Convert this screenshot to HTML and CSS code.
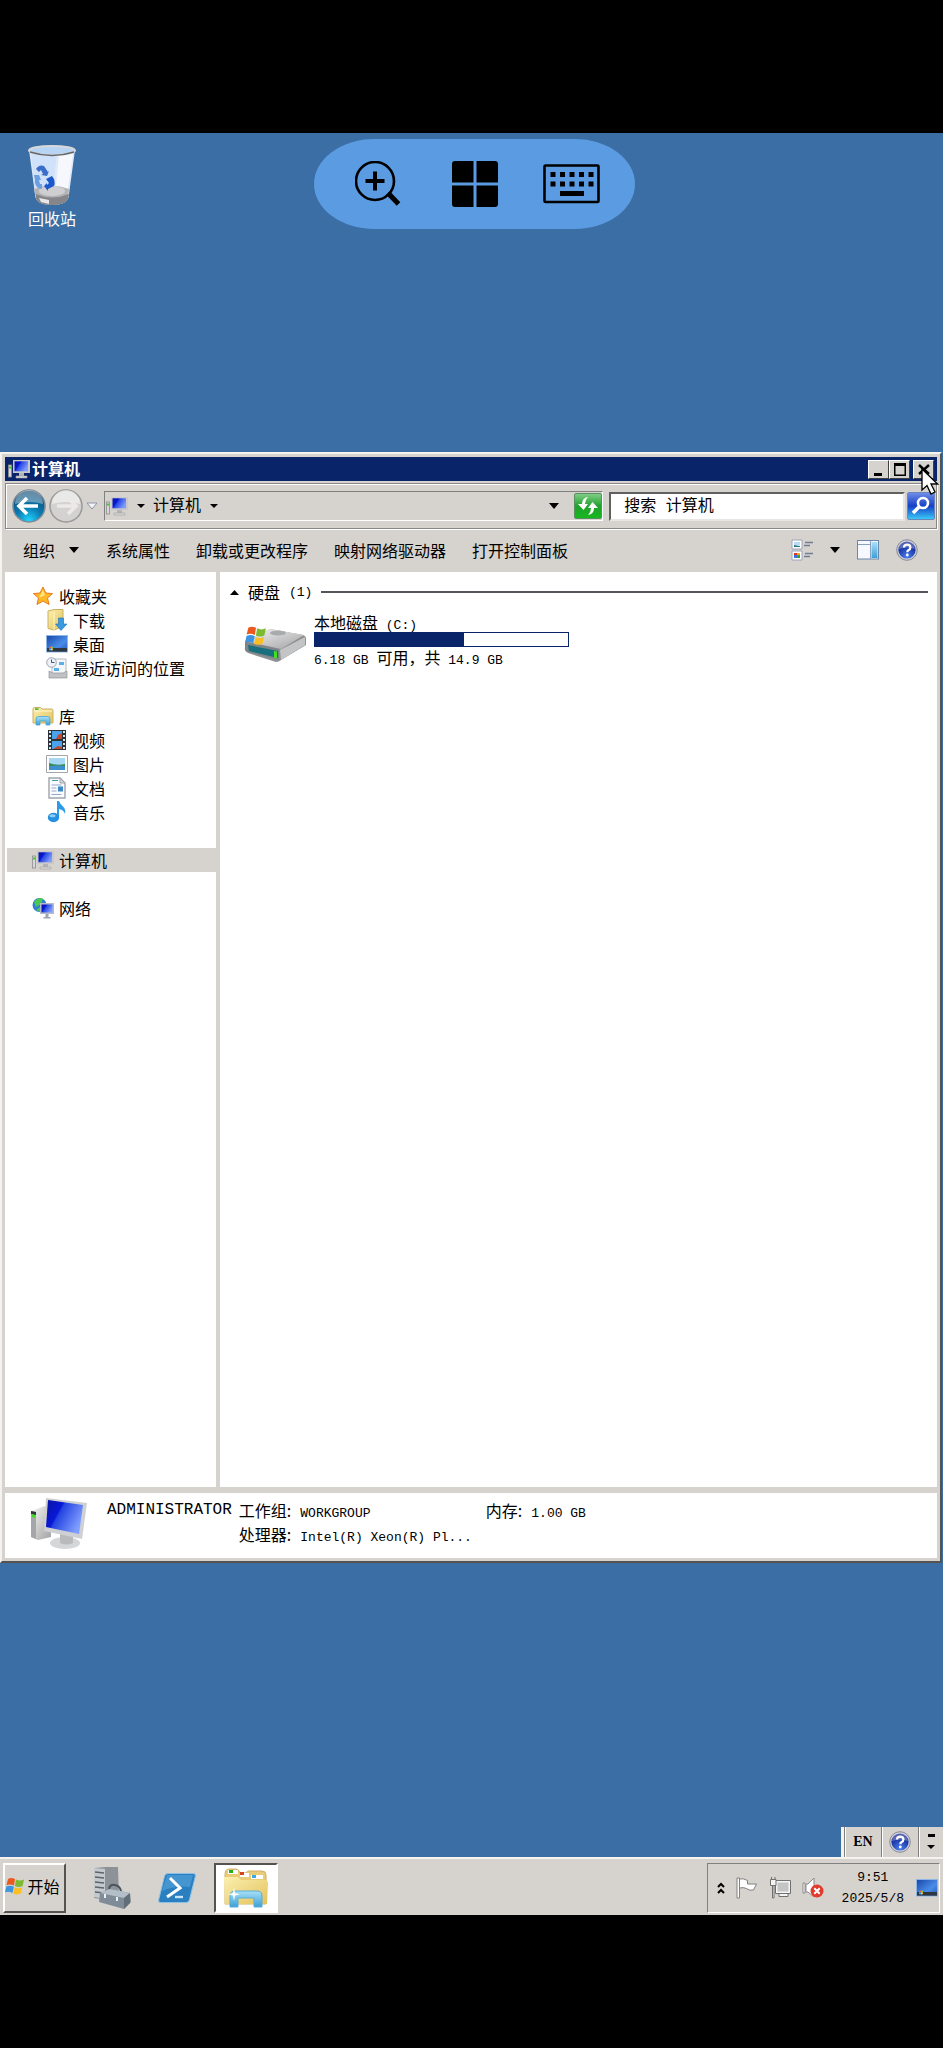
FILE: index.html
```html
<!DOCTYPE html>
<html lang="zh-CN">
<head>
    <meta charset="UTF-8">
    <meta name="viewport" content="width=device-width, initial-scale=1.0">
    <title>计算机</title>
    <link rel="stylesheet" href="styles.css">
</head>
<body>
    <!-- Shared icon shapes -->
    <svg class="defs" aria-hidden="true">
        <defs>
            <linearGradient id="screen" x1="0" y1="0" x2="1" y2="0.5">
                <stop offset="0" stop-color="#0a14a0"/>
                <stop offset="0.4" stop-color="#0818d8"/>
                <stop offset="0.45" stop-color="#2444e0"/>
                <stop offset="1" stop-color="#7f9cff"/>
            </linearGradient>
            <linearGradient id="metal" x1="0" y1="0" x2="1" y2="1">
                <stop offset="0" stop-color="#f6f6f6"/>
                <stop offset="1" stop-color="#a2a2a4"/>
            </linearGradient>
            <linearGradient id="folder" x1="0" y1="0" x2="1" y2="1">
                <stop offset="0" stop-color="#fbf0b0"/>
                <stop offset="1" stop-color="#e3c25c"/>
            </linearGradient>
            <linearGradient id="aqua" x1="0" y1="0" x2="0" y2="1">
                <stop offset="0" stop-color="#a8e0f8"/>
                <stop offset="1" stop-color="#3c9fd6"/>
            </linearGradient>
            <linearGradient id="sky" x1="0" y1="0" x2="1" y2="1">
                <stop offset="0" stop-color="#1746a8"/>
                <stop offset="0.6" stop-color="#4a8ce8"/>
                <stop offset="1" stop-color="#2458b8"/>
            </linearGradient>
            <radialGradient id="blueball" cx="0.5" cy="0.9" r="0.8">
                <stop offset="0" stop-color="#4a80f0"/>
                <stop offset="1" stop-color="#0a1c8c"/>
            </radialGradient>
            <radialGradient id="teal" cx="0.5" cy="0.95" r="0.85">
                <stop offset="0" stop-color="#1fd4ff"/>
                <stop offset="0.5" stop-color="#0a78b0"/>
                <stop offset="1" stop-color="#155078"/>
            </radialGradient>
        </defs>
        <symbol id="i-computer" viewBox="0 0 22 20">
            <rect x="0.5" y="6" width="3" height="12" fill="#d8d8d8" stroke="#8c8c8c" stroke-width="0.8"/>
            <rect x="1" y="7.5" width="2" height="2" fill="#3ad020"/>
            <path d="M5 1h17v13H5z" fill="#c9c9cb"/>
            <path d="M6.5 2.3h13.5v10H6.5z" fill="url(#screen)"/>
            <path d="M11 14h5v3h-5z" fill="#b4b4b6"/>
            <path d="M8 17h11v2H8z" fill="#dadada" stroke="#a0a0a0" stroke-width="0.6"/>
        </symbol>
        <symbol id="i-help" viewBox="0 0 22 22">
            <circle cx="11" cy="11" r="10.3" fill="#c9ccd8" stroke="#8c8c98"/>
            <circle cx="11" cy="11" r="8.6" fill="url(#blueball)"/>
            <path d="M3 10a8 8 0 0 1 16 0q-8-3-16 0z" fill="#fff" opacity="0.3"/>
            <path d="M8 8.6q0-3 3.2-3t3.2 2.8q0 1.6-1.8 2.6-1.3.8-1.3 2.2" fill="none" stroke="#fff" stroke-width="2.2"/>
            <circle cx="11.3" cy="16" r="1.4" fill="#fff"/>
        </symbol>
        <symbol id="i-desktop" viewBox="0 0 22 18">
            <rect x="0.5" y="0.5" width="21" height="16.5" fill="url(#sky)" stroke="#8fb6e4"/>
            <rect x="1" y="13" width="20" height="3.6" fill="#30363e"/>
            <path d="M3 12l2-.6v2H3z" fill="#f06030"/>
            <path d="M5 11.400l2 .4v1.600H5z" fill="#7cd040"/>
            <path d="M3 13.500h2v2l-2-.6z" fill="#40b0f8"/>
            <path d="M5 13.500h2v1.400l-2 .6z" fill="#f8d040"/>
        </symbol>
        <symbol id="i-flag" viewBox="0 0 20 18">
            <path d="M3 2q3-2 7 0L9 8.500q-4-2-7.500-.3z" fill="#ea5a20"/>
            <path d="M11 2.500q4 2 8 0L17.600 9q-4 2-7.700 0z" fill="#7cba32"/>
            <path d="M1.400 9.500q4-1.800 7.500.2L7.400 16q-4-2-7.400-.5z" fill="#3f94e0"/>
            <path d="M9.700 10.300q4 1.800 7.700 0L16 16.300q-4 2.200-7.800.2z" fill="#fbbf24"/>
        </symbol>
        <symbol id="i-library" viewBox="0 0 22 20">
            <path d="M1 3q0-1.500 1.500-1.500h6L10 3h9.500Q21 3 21 4.500V17H1z" fill="url(#folder)" stroke="#cdb060"/>
            <path d="M2 5h18" stroke="#fff8d0"/>
            <rect x="3" y="2.300" width="3.500" height="1.600" fill="#38b838"/>
            <path d="M4 19v-6q0-2.500 2.500-2.500h9Q18 10.500 18 13v6h-4v-4H8v4z" fill="url(#aqua)" stroke="#4aa4d4" stroke-width="0.800"/>
        </symbol>
    </svg>

    <main class="desktop">
        <div class="desktop-top">
            <a class="recycle-bin" href="#">
                <svg width="50" height="62" viewBox="0 0 50 62" aria-hidden="true">
                    <path d="M2 6h46l-6 44q0 11-17 11T8 50z" fill="#dfe9f7"/>
                    <path d="M4 8h26l-5 44-17-2z" fill="#cfe2fa"/>
                    <path d="M32 10h14l-6 41-12 2z" fill="#f6f8fe"/>
                    <path d="M7 45q17-7 35 0l-1 9q-2 7-16 7T9 54z" fill="#b3b3b6"/>
                    <path d="M9 50q16 7 33 0l-1 5q-3 6-16 6T9 55z" fill="#86868a"/>
                    <path d="M12 54l10 2v4l-8-2z" fill="#e8e8ea"/>
                    <ellipse cx="25" cy="47" rx="13" ry="5" fill="#cfcfd2"/>
                    <ellipse cx="25" cy="6.500" rx="23" ry="4.500" fill="#b8d4f4" stroke="#d8d8d8" stroke-width="2"/>
                    <path d="M3 8q22 7 44 0" fill="none" stroke="#66686c" stroke-width="1.500"/>
                    <path d="M9 25q3-5 8-3l4 6 1-1-2 5-6-1 2-1-2-4-2 2z" fill="#3a6ec8"/>
                    <path d="M19 35l6-3q4 5 2 10l-6 3v2l-4-5 3-3v2l2-2z" fill="#1c58cc"/>
                    <path d="M7 31l5 0 2 5-2 0 1 4 2 0v5l-4-1q-4-4-3-8z" fill="#6d9fe0"/>
                </svg>
                <span>回收站</span>
            </a>
            <div class="remote-bar">
                <button aria-label="放大">
                    <svg width="46" height="46" viewBox="0 0 46 46" fill="none" stroke="#000">
                        <circle cx="20" cy="20" r="19" stroke-width="2.600"/>
                        <path d="M10.500 20h19M20 10.500v19" stroke-width="4"/>
                        <path d="M33 32l10.500 11" stroke-width="5"/>
                    </svg>
                </button>
                <button aria-label="开始菜单">
                    <svg width="46" height="46" viewBox="0 0 46 46">
                        <path d="M3 0h18.500v21.500H0V3q0-3 3-3zM24.500 0H43q3 0 3 3v18.500H24.500zM0 24.500h21.500V46H3q-3 0-3-3zM24.500 24.500H46V43q0 3-3 3H24.500z"/>
                    </svg>
                </button>
                <button aria-label="键盘">
                    <svg width="57" height="40" viewBox="0 0 57 40">
                        <rect x="1.500" y="1.500" width="54" height="36.500" rx="1" fill="none" stroke="#000" stroke-width="2.600"/>
                        <path d="M7.500 8h5v5h-5zM17 8h5v5h-5zM26.500 8h5v5h-5zM36 8h5v5h-5zM45.500 8h5v5h-5zM7.500 17.500h5v5h-5zM17 17.500h5v5h-5zM26.500 17.500h5v5h-5zM36 17.500h5v5h-5zM45.500 17.500h5v5h-5zM17 27h24v5H17z"/>
                    </svg>
                </button>
            </div>
        </div>

        <section class="window">
            <header class="title-bar">
                <svg width="22" height="20"><use href="#i-computer"/></svg>
                <h1>计算机</h1>
                <div class="window-buttons">
                    <button aria-label="最小化"><svg width="20" height="17"><path d="M5 12h8v3H5z"/></svg></button>
                    <button aria-label="最大化"><svg width="20" height="17"><path d="M4 2h12v13H4zM5.500 5v8.500h9V5z" fill-rule="evenodd"/></svg></button>
                    <button class="close" aria-label="关闭"><svg width="20" height="17"><path d="M5 4l10 9M15 4L5 13" stroke="#000" stroke-width="2.400"/></svg></button>
                </div>
                <svg class="cursor" width="18" height="28" viewBox="0 0 18 28" aria-hidden="true">
                    <path d="M1 1v21l5-4.500L10 26l4-2-4-8h6.500z" fill="#fff" stroke="#000" stroke-width="1.300"/>
                </svg>
            </header>

            <div class="address-row">
                <div class="history">
                    <button aria-label="后退">
                        <svg width="34" height="34" viewBox="0 0 34 34">
                            <circle cx="17" cy="17" r="16" fill="url(#teal)" stroke="#7c8a94" stroke-width="1.500"/>
                            <path d="M3 15a14 14 0 0 1 28 0q-14-4-28 0z" fill="#fff" opacity="0.350"/>
                            <path d="M15 9l-8 8 8 8M8 17h18" fill="none" stroke="#fff" stroke-width="3.600"/>
                        </svg>
                    </button>
                    <button aria-label="前进">
                        <svg width="34" height="34" viewBox="0 0 34 34">
                            <circle cx="17" cy="17" r="16" fill="#d3d2d0" stroke="#9a9a9a" stroke-width="1.500"/>
                            <path d="M3 15a14 14 0 0 1 28 0q-14-4-28 0z" fill="#fff" opacity="0.500"/>
                            <path d="M19 9l8 8-8 8M26 17H8" fill="none" stroke="#ece9e6" stroke-width="3.600"/>
                        </svg>
                    </button>
                    <button aria-label="最近的页面">
                        <svg width="12" height="8"><path d="M1 1h10L6 7z" fill="#f4f4f8" stroke="#8e94a4"/></svg>
                    </button>
                </div>
                <div class="address">
                    <svg width="22" height="20"><use href="#i-computer"/></svg>
                    <button class="crumb-arrow" aria-label="展开"><svg width="8" height="4"><path d="M0 0h8L4 4z"/></svg></button>
                    <a href="#">计算机</a>
                    <button class="crumb-arrow" aria-label="子文件夹"><svg width="8" height="4"><path d="M0 0h8L4 4z"/></svg></button>
                    <button class="address-drop" aria-label="以前的位置"><svg width="10" height="6"><path d="M0 0h10L5 6z"/></svg></button>
                    <button class="refresh" aria-label="刷新">
                        <svg width="23" height="20" viewBox="0 0 23 20" fill="#fff">
                            <path d="M11 1Q5 2 5 8H1l5.500 6L11 8H8q0-4 3-7zM11 19q6-1 6-7h4l-5.500-6L11 12h3q0 4-3 7z"/>
                        </svg>
                    </button>
                </div>
                <form class="search">
                    <input type="text" placeholder="搜索 计算机" aria-label="搜索 计算机">
                    <button type="button" aria-label="搜索">
                        <svg width="22" height="22" viewBox="0 0 22 22" fill="none" stroke="#fff">
                            <circle cx="13" cy="8" r="5" stroke-width="2.600"/>
                            <path d="M9 12l-6 6" stroke-width="3.600"/>
                        </svg>
                    </button>
                </form>
            </div>

            <div class="command-bar">
                <button class="organize">组织 <svg width="10" height="6"><path d="M0 0h10L5 6z"/></svg></button>
                <button>系统属性</button>
                <button>卸载或更改程序</button>
                <button>映射网络驱动器</button>
                <button>打开控制面板</button>
                <div class="view-tools">
                    <button aria-label="更改视图">
                        <svg width="22" height="22" viewBox="0 0 22 22">
                            <path d="M1 1h10v9H1zM1 12h10v9H1z" fill="#fff" stroke="#9aa4b8"/>
                            <path d="M3 3h6v3H3z" fill="#b8dcf4"/>
                            <path d="M3 6l6 1v1H3z" fill="#247888"/>
                            <path d="M3 14h3v2H3z" fill="#e03828"/><path d="M6 14h3v2H6z" fill="#e8b020"/>
                            <path d="M3 16h3v3H3z" fill="#3a70d8"/><path d="M6 16h3v3H6z" fill="#3aa030"/>
                            <path d="M14 3.500h8M13 6.500h6M14 14.500h8M13 17.500h6" stroke="#6e7c94" stroke-width="1.400"/>
                        </svg>
                    </button>
                    <button aria-label="视图选项"><svg width="10" height="6"><path d="M0 0h10L5 6z"/></svg></button>
                    <button aria-label="预览窗格">
                        <svg width="22" height="20" viewBox="0 0 22 20">
                            <rect x="0.500" y="0.500" width="21" height="18.500" fill="#f6f8fd" stroke="#6a86a8"/>
                            <path d="M1 4.500h13M13.500 1v18" stroke="#8aa0c0"/>
                            <rect x="14.500" y="2" width="6" height="16" fill="url(#aqua)"/>
                        </svg>
                    </button>
                    <button aria-label="帮助"><svg width="22" height="22"><use href="#i-help"/></svg></button>
                </div>
            </div>

            <div class="panes">
                <nav class="nav-pane">
                    <ul>
                        <li><a href="#">
                            <svg width="22" height="20" viewBox="0 0 22 20"><path d="M11 1l2.800 6 6.700.6-5 4.300 1.500 6.600-6-3.500-6 3.500 1.500-6.600-5-4.300L8 7z" fill="#fdb927" stroke="#e8781c"/><path d="M11 4l2 5-6 3z" fill="#ffe680"/></svg>
                            收藏夹</a>
                        </li>
                        <li class="child"><a href="#">
                            <svg width="22" height="22" viewBox="0 0 22 22"><path d="M2 2l6-1.500h9v17L8 21l-6-1.500z" fill="url(#folder)" stroke="#cbb060"/><path d="M8 3v18" stroke="#fff6c8"/><path d="M12.500 9h5v6H21l-6 6.500L9.500 15h3z" fill="#3a9ae0" stroke="#1e72bc" stroke-width="0.600"/></svg>
                            下载</a>
                        </li>
                        <li class="child"><a href="#"><svg width="22" height="18"><use href="#i-desktop"/></svg>桌面</a></li>
                        <li class="child"><a href="#">
                            <svg width="22" height="22" viewBox="0 0 22 22"><path d="M6 2h14v15H6z" fill="#f4f6fa" stroke="#b4b8c0"/><path d="M3 14l4 2h10l4-2v7H3z" fill="#bfc1c4" stroke="#94969a" stroke-width="0.700"/><circle cx="5.500" cy="5.500" r="4.800" fill="#eef2f8" stroke="#9aa2b0"/><path d="M5.500 2.500v3h3" fill="none" stroke="#4a5464"/><path d="M13 5h5v3h-5zM8 11h5v3H8z" fill="#58b0ea"/></svg>
                            最近访问的位置</a>
                        </li>
                    </ul>
                    <ul>
                        <li><a href="#"><svg width="22" height="20"><use href="#i-library"/></svg>库</a></li>
                        <li class="child"><a href="#">
                            <svg width="22" height="20" viewBox="0 0 22 20"><path d="M2 0h18v20H2z" fill="#2a3238"/><path d="M6 1h10v8H6zM6 11h10v8H6z" fill="#4aa2ec"/><path d="M10 9l2-4 4-2v6zM7 19l5-3 4 1v2z" fill="#c0482c"/><path d="M4 1v18M18 1v18" stroke="#d4e8ec" stroke-width="2" stroke-dasharray="2 2"/></svg>
                            视频</a>
                        </li>
                        <li class="child"><a href="#">
                            <svg width="22" height="18" viewBox="0 0 22 18"><path d="M.5.5h21v17H.5z" fill="#fff" stroke="#a4a8ac"/><path d="M3 3h16v12H3z" fill="#a6d8f6"/><path d="M3 8q8 3 16 1v3H3z" fill="#3c8c58"/><path d="M3 11.500q8-2 16 0V15H3z" fill="#3c90d0"/></svg>
                            图片</a>
                        </li>
                        <li class="child"><a href="#">
                            <svg width="22" height="22" viewBox="0 0 22 22"><path d="M3 1h11l5 5v15H3z" fill="#fafbfe" stroke="#a0a4ac" stroke-width="1.400"/><path d="M14 1v5h5z" fill="#d0d6de" stroke="#a0a4ac"/><path d="M6 3.500h6" stroke="#38a0a0"/><path d="M5.500 8h10M5.500 11h5M5.500 14h5M5.500 17.500h10" stroke="#98a8cc"/><path d="M12 9.500h5v5h-5z" fill="#3a88c8"/></svg>
                            文档</a>
                        </li>
                        <li class="child"><a href="#">
                            <svg width="22" height="22" viewBox="0 0 22 22"><path d="M11 0h2q1 3 4 5.500t2 7.500q-1-4-6-5v8h-2z" fill="#2c9ae6"/><ellipse cx="7.500" cy="16.500" rx="5.700" ry="4.700" fill="#2590e0"/><ellipse cx="6.500" cy="14.800" rx="3" ry="1.500" fill="#8cd0f8"/></svg>
                            音乐</a>
                        </li>
                    </ul>
                    <ul>
                        <li class="selected"><a href="#"><svg width="22" height="20"><use href="#i-computer"/></svg>计算机</a></li>
                    </ul>
                    <ul>
                        <li><a href="#">
                            <svg width="22" height="22" viewBox="0 0 22 22"><circle cx="7.500" cy="8" r="7" fill="#2f7ed8"/><path d="M2 5q5-6 9-3l-2 5-5 3zM4 13l4-3 2 3-2 2z" fill="#4cc850"/><path d="M8 6h14v11H8z" fill="#b8bcc8"/><path d="M9.500 7.500h11v8h-11z" fill="url(#screen)"/><path d="M13.500 17h3v3h2v1.500h-7V20h2z" fill="#a0a4ac"/></svg>
                            网络</a>
                        </li>
                    </ul>
                </nav>

                <section class="content">
                    <h2 class="group"><svg width="9" height="5"><path d="M0 5h9L4.500 0z"/></svg>硬盘<span class="latin">(1)</span></h2>
                    <a class="drive" href="#">
                        <svg width="64" height="38" viewBox="0 0 64 38" aria-hidden="true">
                            <path d="M2 16L27 4l33 6q3 1 3 3v7L38 35q-2 2-5 2L5 28q-4-2-3-5z" fill="#8e9092"/>
                            <path d="M2 16L27 4l34 6-23 14z" fill="url(#metal)"/>
                            <path d="M37 25l25-13v8L38 35z" fill="#c2c4c6"/>
                            <path d="M2 17l34 7v11L5 27q-3-1-3-4z" fill="#7d8488"/>
                            <path d="M5 20l30 6v7L6 26z" fill="#18707e"/>
                            <path d="M31 26l3 .5v7l-3-.7z" fill="#42e020"/>
                            <ellipse cx="35" cy="8" rx="8" ry="2.500" fill="#a8aaac"/>
                            <svg x="2" y="0" width="22" height="21"><use href="#i-flag"/></svg>
                        </svg>
                        <div class="drive-info">
                            <div>本地磁盘<span class="latin"> (C:)</span></div>
                            <div class="usage"><div class="used" style="width: 59%"></div></div>
                            <div><span class="latin">6.18 GB </span>可用，共<span class="latin"> 14.9 GB</span></div>
                        </div>
                    </a>
                </section>
            </div>

            <footer class="details">
                <svg width="58" height="52" viewBox="0 0 58 52" aria-hidden="true">
                    <path d="M1 13l14-5 6 2v29L8 42l-7-3z" fill="url(#metal)"/>
                    <path d="M1 13l5 1v27l-5-2z" fill="#a4a6aa"/>
                    <path d="M1 13l5 1v3l-5-1z" fill="#30343a"/>
                    <path d="M2 16l3 1v3l-3-1z" fill="#44d828"/>
                    <ellipse cx="35" cy="45" rx="15" ry="6" fill="#d4d6d8"/>
                    <path d="M30 34l13 3v8q-6 3-13 0z" fill="#b8babc"/>
                    <path d="M16 0l41 5-5 36-38-8z" fill="#cfd0d4"/>
                    <path d="M18 2l35 5-4 29-33-7z" fill="url(#screen)"/>
                </svg>
                <div class="latin machine">ADMINISTRATOR</div>
                <dl>
                    <div><dt>工作组:</dt><dd class="latin">WORKGROUP</dd></div>
                    <div><dt>处理器:</dt><dd class="latin">Intel(R) Xeon(R) Pl...</dd></div>
                </dl>
                <dl>
                    <div><dt>内存:</dt><dd class="latin">1.00 GB</dd></div>
                </dl>
            </footer>
        </section>

        <div class="language-bar">
            <button class="lang">EN</button>
            <button aria-label="帮助"><svg width="22" height="22"><use href="#i-help"/></svg></button>
            <button class="lang-menu" aria-label="选项"><svg width="8" height="16"><path d="M1 0h7v3H1zM0 11h8l-4 4z"/></svg></button>
        </div>

        <footer class="taskbar">
            <button class="start"><svg width="20" height="20"><use href="#i-flag"/></svg>开始</button>
            <div class="tasks">
                <button aria-label="服务器管理器">
                    <svg width="40" height="42" viewBox="0 0 40 42">
                        <path d="M1 1l12-1h12l1 30-12 3-13-2z" fill="#8c9298"/>
                        <path d="M1 1l11 1v30L1 30z" fill="#c4c9ce"/>
                        <path d="M2 5l9 1M2 10l9 1M2 15l9 1M2 20l9 1M2 25l9 1" stroke="#5c646c" stroke-width="1.500"/>
                        <path d="M16 22q1-5 6-4 5 1 6 6" fill="none" stroke="#4c545c" stroke-width="2"/>
                        <path d="M7 26l10-4 20 4 1 9-7 7L6 35z" fill="#7f8b96"/>
                        <path d="M7 26l10-4 20 4-6 5z" fill="#b4bec6"/>
                        <path d="M31 31l6-5v10l-6 6z" fill="#626e78"/>
                        <path d="M11 27h2v4h-2zM23 30h2v4h-2z" fill="#eef0f2"/>
                    </svg>
                </button>
                <button aria-label="PowerShell">
                    <svg width="38" height="30" viewBox="0 0 38 30">
                        <path d="M10 .5h25q3 0 2.400 2.500l-6 24q-.6 2.500-3.400 2.500H3Q0 29.500.600 27l6-24Q7.200.5 10 .5z" fill="#2a7fc0" stroke="#8cc0e4"/>
                        <path d="M9 2h26l-3 12q-14-2-28 4z" fill="#4596d0"/>
                        <path d="M12 5l10 10L9 24" fill="none" stroke="#fff" stroke-width="3"/>
                        <path d="M17 24h8" stroke="#c8e6f8" stroke-width="2.400"/>
                    </svg>
                </button>
                <button class="active" aria-label="资源管理器">
                    <svg width="46" height="40" viewBox="0 0 46 40">
                        <path d="M2 7q0-6 4-6h7q3 0 4 4h6q1-2 3-2h13q4 0 4 4v29H2z" fill="#e8cc78" stroke="#cdb068"/>
                        <path d="M5 2h10v4H5z" fill="#fff"/><path d="M6 2h4v3H6z" fill="#20b020"/>
                        <path d="M17 5h9v4h-9z" fill="#fff"/><path d="M17 4h4v3h-4z" fill="#d84020"/>
                        <path d="M28 7h12v4H28z" fill="#fff"/><path d="M29 7h4v3h-4z" fill="#38a8e8"/>
                        <path d="M1 9h14l3 3h26l1 3-1 21H2z" fill="url(#folder)"/>
                        <path d="M7 39V28q0-5 5-5h22q5 0 5 5v11h-8v-9H15v9z" fill="url(#aqua)" stroke="#58aed8"/>
                        <path d="M11 19l1 6 5 1.500-5 1L11 33l-1-5.500-5-1 5-1.500z" fill="#fff"/>
                    </svg>
                </button>
            </div>
            <div class="tray">
                <button aria-label="显示隐藏的图标"><svg width="8" height="12" fill="none" stroke="#000" stroke-width="2"><path d="M1 5l3-3 3 3M1 11l3-3 3 3"/></svg></button>
                <button aria-label="操作中心"><svg width="22" height="22" viewBox="0 0 22 22" fill="#fff" stroke="#808080"><path d="M1 1h2.500v20H1zM3.500 2q4-1 8 1.500v3.500h9l-3 6q-4 1-7-1.500-3-1.500-7-.5z"/></svg></button>
                <button aria-label="网络"><svg width="22" height="22" viewBox="0 0 22 22" fill="#f4f4f4" stroke="#707070"><path d="M6.500 3.500h15v13h-15zM10 19.500h9v-3h-9z"/><path d="M8.500 5.500h11v9h-11z" fill="#c4c4c4" stroke="none"/><path d="M1.500 2.500h5.500v6H1.500zM3.500 8.500h1.500v12.500h-1.500zM2.500 0v3M6 0v3"/></svg></button>
                <button aria-label="音量"><svg width="22" height="22" viewBox="0 0 22 22"><path d="M1 6h2v10H1zM4 7h2l6-6v19l-6-5H4z" fill="#fff" stroke="#8a8a8a"/><circle cx="15" cy="14" r="6.500" fill="#e23a2c"/><path d="M12.300 11.300l5.400 5.400M17.700 11.300l-5.400 5.400" stroke="#fff" stroke-width="2"/></svg></button>
                <time class="latin" datetime="2025-05-08T09:51">9:51<br>2025/5/8</time>
                <button aria-label="显示桌面"><svg width="22" height="18"><use href="#i-desktop"/></svg></button>
            </div>
        </footer>
    </main>
</body>
</html>
```

FILE: styles.css
```css
* {
    box-sizing: border-box;
}

body {
    margin: 0;
    min-height: 100vh;
    padding: 133px 0;
    background: #000;
    color: #000;
    font-family: "Noto Sans CJK SC", sans-serif;
    font-size: 16px;
    line-height: 24px;
    display: flex;
    flex-direction: column;
}

button {
    font: inherit;
    color: inherit;
    background: none;
    border: none;
    padding: 0;
    display: flex;
    align-items: center;
    justify-content: center;
    white-space: nowrap;
}

a {
    color: inherit;
    text-decoration: none;
}

svg {
    display: block;
    flex-shrink: 0;
}

.defs {
    position: absolute;
    width: 0;
    height: 0;
}

.latin {
    font-family: "Liberation Mono", monospace;
    font-size: 13px;
    line-height: 1;
    white-space: pre;
}

.desktop {
    flex: 1;
    display: flex;
    flex-direction: column;
    background: #3a6ea5;
}

/* Top of the desktop */
.desktop-top {
    display: grid;
    grid-template-columns: 1fr auto 1fr;
    align-items: start;
    min-height: 319px;
    padding: 6px 0 0 6px;
}

.recycle-bin {
    width: 92px;
    padding-top: 5px;
    display: flex;
    flex-direction: column;
    align-items: center;
    color: #fff;
}

.remote-bar {
    display: flex;
    align-items: center;
    height: 90px;
    padding: 0 15px;
    border-radius: 60px / 45px;
    background: #5b9be2;
}

.remote-bar button {
    width: 97px;
    height: 90px;
}

/* Explorer window */
.window {
    flex: 1;
    display: flex;
    flex-direction: column;
    margin-right: 1px;
    padding: 3px;
    background: #d6d3ce;
    border: 2px solid;
    border-color: #f4f3f0 #55534f #55534f #f4f3f0;
}

.title-bar {
    position: relative;
    display: flex;
    align-items: center;
    gap: 2px;
    height: 24px;
    padding: 0 3px;
    background: #0a246a;
    color: #fff;
}

.title-bar h1 {
    margin: 0;
    font-size: 16px;
    font-weight: 700;
    line-height: 22px;
    padding-bottom: 2px;
}

.window-buttons {
    display: flex;
    margin-left: auto;
}

.window-buttons button {
    width: 21px;
    height: 19px;
    background: #d6d3ce;
    border: 1px solid;
    border-color: #fff #404040 #404040 #fff;
}

.window-buttons .close {
    margin-left: 3px;
}

.cursor {
    position: absolute;
    top: 11px;
    right: -2px;
    z-index: 2;
}

.address-row {
    display: flex;
    align-items: center;
    gap: 6px;
    height: 46px;
    margin: 2px 0;
    padding: 0 1px 0 6px;
    border: 1px solid #8a8884;
    box-shadow: inset 1px 1px #fff, 1px 1px #fff;
}

.history {
    display: flex;
    align-items: center;
    gap: 3px;
}

.address {
    flex: 5;
    display: flex;
    align-items: center;
    height: 30px;
    padding-left: 1px;
    border: 1px solid;
    border-color: #808080 #fff #fff #808080;
}

.address a {
    padding-bottom: 4px;
}

.crumb-arrow {
    width: 25px;
}

.address-drop {
    width: 30px;
    margin-left: auto;
}

.refresh {
    width: 28px;
    height: 26px;
    border: 1px solid #5a9060;
    border-radius: 2px;
    margin-left: 5px;
    background: linear-gradient(#7fce86, #22a02e 50%, #16b81c);
}

.search {
    flex: 3 0 28px;
    display: flex;
    align-items: center;
    gap: 2px;
}

.search input {
    flex: 1;
    min-width: 0;
    height: 29px;
    padding: 2px 13px 0;
    border: 2px solid;
    border-color: #606060 #e8e6e2 #e8e6e2 #606060;
    background: #fff;
    font-family: "Liberation Mono", "Noto Sans CJK SC", monospace;
    font-size: 16px;
}

.search input::placeholder {
    color: #000;
    opacity: 1;
}

.search button {
    width: 28px;
    height: 28px;
    border: 1px solid #6a86b8;
    border-radius: 2px;
    background: linear-gradient(#6f8ce8, #1540c8 50%, #3ac8f8);
}

.command-bar {
    display: flex;
    align-items: center;
    gap: 26px;
    height: 41px;
    padding: 0 19px 3px 18px;
}

.organize {
    gap: 14px;
    padding-right: 1px;
}

.view-tools {
    display: flex;
    align-items: center;
    gap: 17px;
    margin-left: auto;
}

.panes {
    flex: 1;
    display: flex;
    gap: 4px;
}

.nav-pane {
    width: 211px;
    padding-top: 12px;
    background: #fff;
}

.nav-pane ul {
    list-style: none;
    margin: 0 0 24px;
    padding: 0;
}

.nav-pane a {
    display: flex;
    align-items: center;
    gap: 5px;
    height: 24px;
    padding-left: 27px;
}

.nav-pane .child a {
    padding-left: 41px;
}

.nav-pane .selected {
    margin-left: 2px;
    background: #d6d3ce;
}

.nav-pane .selected a {
    padding-left: 25px;
}

.content {
    flex: 1;
    padding: 8px 9px 8px 10px;
    background: #fff;
}

.group {
    display: flex;
    align-items: center;
    gap: 9px;
    margin: 0 0 8px;
    font-size: 16px;
    font-weight: 400;
}

/* Rule that runs from the group name to the edge */
.group::after {
    content: "";
    flex: 1;
    height: 2px;
    background: #55565c;
}

.drive {
    display: flex;
    align-items: flex-end;
    gap: 7px;
    padding-left: 13px;
}

.drive > svg {
    margin-bottom: 4px;
}

.drive-info {
    line-height: 20px;
}

.usage {
    width: 255px;
    height: 15px;
    border: 1px solid #0a246a;
    background: #fff;
}

.used {
    height: 100%;
    background: #0a246a;
}

.details {
    display: flex;
    gap: 7px;
    height: 65px;
    margin-top: 6px;
    padding: 5px 24px 4px 25px;
    background: #fff;
}

.machine {
    font-size: 16px;
    line-height: 24px;
    padding-left: 12px;
}

.details dl {
    width: 240px;
    margin: 0;
}

.details dl div {
    display: flex;
    align-items: baseline;
    gap: 9px;
    height: 24px;
}

.details dd {
    margin: 0;
}

/* Language bar and taskbar */
.language-bar {
    display: flex;
    align-self: flex-end;
    height: 30px;
    margin-top: 264px;
    background: #d6d3ce;
    border-left: 3px solid #f4f3f0;
}

.language-bar button {
    width: 37px;
    border-left: 1px solid #808080;
    box-shadow: inset 1px 0 #fff;
}

.language-bar .lang {
    font-family: "Liberation Serif", serif;
    font-size: 14px;
    font-weight: 700;
}

.language-bar .lang-menu {
    width: 25px;
}

.taskbar {
    display: flex;
    align-items: center;
    gap: 20px;
    height: 58px;
    padding: 2px 3px 0;
    background: #d6d3ce;
    border-top: 2px solid #f4f3f0;
}

.start {
    gap: 2px;
    width: 63px;
    height: 50px;
    padding: 0 4px 4px 0;
    border: 2px solid;
    border-color: #fff #55534f #55534f #fff;
}

.tasks {
    display: flex;
    gap: 11px;
}

.tasks button {
    width: 53px;
    height: 50px;
}

.tasks .active {
    width: 64px;
    background: #fff;
    border: 2px solid;
    border-color: #55534f #fff #fff #55534f;
}

.tray {
    display: flex;
    align-items: center;
    gap: 11px;
    height: 50px;
    margin-left: auto;
    padding: 0 1px 0 9px;
    border: 1px solid;
    border-color: #808080 #fff #fff #808080;
}

.tray time {
    padding: 0 1px 0 7px;
    line-height: 21px;
    text-align: center;
}
```
